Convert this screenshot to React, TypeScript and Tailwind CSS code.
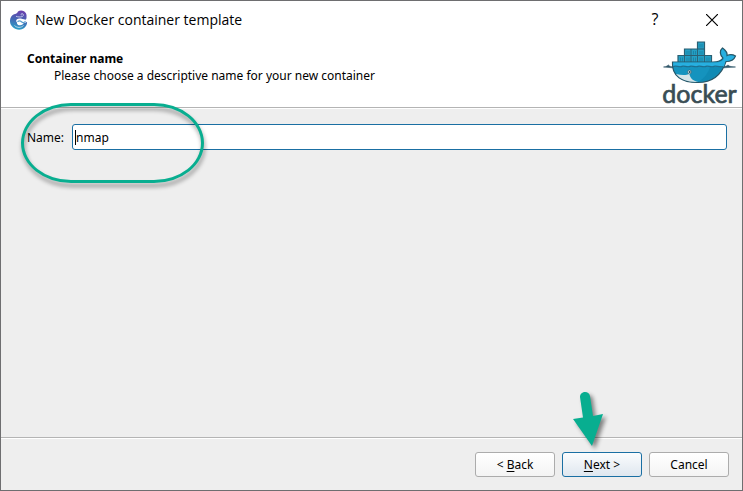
import type { ReactNode } from "react";

function AppIcon() {
  return (
    <svg viewBox="0 0 20 20" className="size-5" aria-hidden="true">
      <defs>
        <linearGradient id="chameleon" x1="0.6" y1="0" x2="0.4" y2="1">
          <stop offset="0" stopColor="#6d3fae" />
          <stop offset="0.5" stopColor="#4468b4" />
          <stop offset="1" stopColor="#2aa0c8" />
        </linearGradient>
      </defs>
      <path
        fill="url(#chameleon)"
        d="M9 1.500C10.500 .2 13 0 15 1.200C17 2.400 17.800 4.500 17.500 6.500C17.600 8 17.500 9 16.500 9.800C13 8.500 9.500 7.800 8 9.300C6.800 10.500 7 11.800 8 12.600C7.800 13.500 8.500 14.800 10 15.200C12.500 15.700 14.300 14.500 14.800 12.500C15.800 13.200 17 12.500 18 11.700C18.500 15 16 18.500 12 19.500C6.500 20.500 1.200 16.500 1 11.500C.8 8 2.500 5.300 5 4.200C6.800 3.800 8.200 3.500 9 1.500Z"
      />
      <path d="M7 6.300C9 7 11 7.300 13.500 6.500C15 5.500 14.500 3.700 13 3.600C12 3.700 11.800 4.800 12.600 5.200" fill="none" stroke="#c9cdec" strokeWidth="0.9" />
      <path d="M5.500 15.500C8 18 12 18 14.500 15.500" fill="none" stroke="#d8eef6" strokeWidth="0.8" />
      <path d="M8.500 11.800Q10.500 10 12.500 11.800T16.500 11" fill="none" stroke="#5a9fce" strokeWidth="1.200" />
    </svg>
  );
}

function DockerLogo() {
  return (
    <svg viewBox="0 0 76 67" className="h-[67px] w-[76px] overflow-visible" role="img" aria-label="docker">
      <g stroke="#2b5f72" strokeWidth="1.200" fill="#259fc4">
        <path d="M35.500 4H42.500V11H35.500zM22.500 11H42.500V17.500H22.500zM16 17.500H49.500V25H16z" />
        <path d="M29 11V24M35.500 11V24M42.500 17V24M22.500 17V24M22.500 17.500H42.500" fill="none" strokeWidth="0.9" />
      </g>
      <path
        d="M18.500 19.500v4M20.500 19.500v4M25 13v3.500M27 13v3.500M31.500 13v3.500M33.500 13v3.500M38 6v3.500M40 6v3.500M38 13v3.500M40 13v3.500M25 19.500v4M27 19.500v4M31.500 19.500v4M33.500 19.500v4M38 19.500v4M40 19.500v4M45 19.500v4M47 19.500v4"
        stroke="#137b9f"
        strokeWidth="0.7"
      />
      <path
        d="M10.500 24H51C56 24 59.500 22.500 61 20C57.500 16.500 57.500 12.500 60.500 10C64 12.500 65.500 15 65 17.500C68 16.200 71 16.500 73.500 18C72 22 68.500 23.500 64 23.500C60 35.500 52 44.300 36 44.500C20.500 44.700 9.500 38.500 10.500 24Z"
        fill="#1593be"
        stroke="#285768"
        strokeWidth="1.200"
      />
      <path
        d="M11.200 24.600H53C58 24.600 62 22.500 61.700 19.800C58.700 16.500 58.500 13 60.600 11C63.500 13.500 64.800 16 64.200 18.800C67 17.200 70 17.300 72.500 18.400C70.500 22 67 22.700 63.500 22.900L62 28.500H11.200Z"
        fill="#27afe0"
      />
      <path d="M36 44C50 43.500 57 35.500 60.500 29H48C46 35 43 40 36 44Z" fill="#0e84ae" opacity="0.6" />
      <path d="M14 36C20 37.500 25 37.200 27.500 35.700C28 40.500 31 42.500 36 43.900C26 44.300 18.500 41.500 14 36Z" fill="#d5e4e8" />
      <circle cx="27.500" cy="34" r="1.900" fill="#dbecef" stroke="#285768" strokeWidth="0.6" />
      <circle cx="27.700" cy="34" r="1" fill="#234b5c" />
      <path d="M11 28.700C14 27 16 29.200 19 28.700C21 27 24 29.200 27 28.700C29 27 32 29.200 35 28.700C37 27 40 29.200 43 28.700C45 27 48 29.200 51 28.700C53 27 56 29.200 61 28.700" fill="none" stroke="#1d6f90" strokeWidth="1.200" />
      <path d="M1.500 29C4.500 28.800 5.500 27.500 6.500 27C7.500 28.500 9.500 28.700 11 28.800L10.500 29.800ZM62 28.500C64 28.500 65 27.500 66 27C67.500 28.700 70 28.800 73.500 29L62 29.800Z" fill="#31576a" stroke="#31576a" strokeWidth="0.6" />
      <text x="37.500" y="65" textAnchor="middle" fill="#394d54" stroke="#394d54" strokeWidth="0.7" fontSize="25" fontFamily="Lato, sans-serif">
        docker
      </text>
    </svg>
  );
}

function TitleBar() {
  return (
    <header className="flex h-[37px] items-center pl-2 pr-[18px]">
      <AppIcon />
      <h1 className="ml-[6px] flex-1 font-['Open_Sans',sans-serif] text-[14px]">New Docker container template</h1>
      <button type="button" aria-label="Help" className="mr-[33px] w-6 font-['Open_Sans',sans-serif] text-[16px]">
        ?
      </button>
      <button type="button" aria-label="Close" className="flex w-6 justify-center">
        <svg viewBox="0 0 12 12" className="size-3" aria-hidden="true">
          <path d="M0 0L12 12M12 0L0 12" stroke="#000" strokeWidth="1.200" />
        </svg>
      </button>
    </header>
  );
}

function WizardButton({ primary = false, children }: { primary?: boolean; children: ReactNode }) {
  return (
    <button
      type="button"
      className={
        "h-[25px] w-20 rounded-[3px] border bg-linear-to-b " +
        (primary ? "border-[#1a6fa3] from-[#fbfcfd] to-[#dfe7ef]" : "border-[#acacac] from-white to-[#f4f4f4]")
      }
    >
      {children}
    </button>
  );
}

export default function App() {
  return (
    <div className="flex min-h-screen flex-col border border-[#6e6e70] bg-[#eeeeee] font-['Noto_Sans',sans-serif] text-[12px] leading-[17px] text-black">
      <div className="border-b border-[#b4b4b4] bg-white">
        <TitleBar />
        <div className="flex h-[69px] justify-between pl-[26px] pr-1">
          <div className="pt-3">
            <h2 className="font-bold">Container name</h2>
            <p className="pl-[27px]">Please choose a descriptive name for your new container</p>
          </div>
          <DockerLogo />
        </div>
      </div>
      <main className="flex-1 border-t border-white">
        <div className="relative flex items-center gap-2 pt-[15px] pr-[15px] pl-[26px]">
          <label htmlFor="container-name">Name:</label>
          <input
            id="container-name"
            defaultValue="nmap"
            className="h-[26px] min-w-0 flex-1 rounded-[3px] border border-[#1a6fa3] bg-white px-[3px] outline-none"
          />
          <span className="absolute top-[21px] left-[74px] h-[15px] w-px bg-black" />
          <div className="pointer-events-none absolute -top-[6px] left-5 h-[80px] w-[183px] rounded-[50px/40px] border-[3px] border-[#08ae90] drop-shadow-[1px_4px_2px_#00000066]" />
        </div>
      </main>
      <footer className="border-t border-[#b4b4b4]">
        <div className="flex justify-end gap-[7px] border-t border-white pt-[13px] pr-[13px] pb-[13px]">
          <WizardButton>
            &lt; <u className="underline-offset-2">B</u>ack
          </WizardButton>
          <div className="relative">
            <WizardButton primary>
              <u className="underline-offset-2">N</u>ext &gt;
            </WizardButton>
            <svg
              viewBox="0 0 36 60"
              className="pointer-events-none absolute -top-[62px] left-[10px] h-[60px] w-9 drop-shadow-[3px_3px_2px_#00000077]"
              aria-hidden="true"
            >
              <path d="M8 7C8 1 17 0 18 6L21 26L31 24L20 56L1 29L11 27.500Z" fill="#08ae90" />
            </svg>
          </div>
          <WizardButton>Cancel</WizardButton>
        </div>
      </footer>
    </div>
  );
}
